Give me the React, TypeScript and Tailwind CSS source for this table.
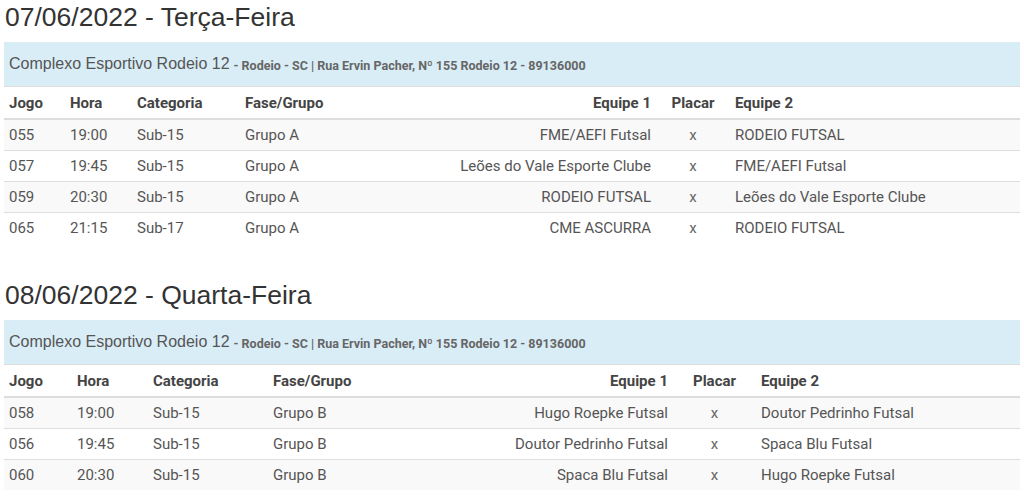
import React from "react";

type Row = [string, string, string, string, string, string];

const day1: Row[] = [
  ["055", "19:00", "Sub-15", "Grupo A", "FME/AEFI Futsal", "RODEIO FUTSAL"],
  ["057", "19:45", "Sub-15", "Grupo A", "Leões do Vale Esporte Clube", "FME/AEFI Futsal"],
  ["059", "20:30", "Sub-15", "Grupo A", "RODEIO FUTSAL", "Leões do Vale Esporte Clube"],
  ["065", "21:15", "Sub-17", "Grupo A", "CME ASCURRA", "RODEIO FUTSAL"],
];

const day2: Row[] = [
  ["058", "19:00", "Sub-15", "Grupo B", "Hugo Roepke Futsal", "Doutor Pedrinho Futsal"],
  ["056", "19:45", "Sub-15", "Grupo B", "Doutor Pedrinho Futsal", "Spaca Blu Futsal"],
  ["060", "20:30", "Sub-15", "Grupo B", "Spaca Blu Futsal", "Hugo Roepke Futsal"],
];

function Section({
  title,
  rows,
  widths,
  className,
}: {
  title: string;
  rows: Row[];
  widths: number[];
  className?: string;
}) {
  return (
    <div className={className}>
      <h3 className="pl-[5px] pt-[2px] text-[26.5px] leading-[30px] text-[#333] font-['Liberation_Sans',Arial,sans-serif]">
        {title}
      </h3>
      <div className="mx-[4px] mt-[10px]">
        <div className="flex h-[44px] items-center whitespace-nowrap bg-[#d9edf7] px-[5px] text-[#555] font-['Liberation_Sans',Arial,sans-serif]">
          <span className="text-[16px] leading-[20px]">Complexo Esportivo Rodeio 12</span>
          <span className="ml-[4px] mt-[3px] text-[12.5px] leading-[16px] font-bold font-['Roboto',sans-serif] text-[#666]">
            - Rodeio - SC | Rua Ervin Pacher, Nº 155 Rodeio 12 - 89136000
          </span>
        </div>
        <table className="w-full table-fixed border-collapse font-['Roboto',sans-serif] text-[15px] leading-[20px] text-[#555]">
          <colgroup>
            {widths.map((w, i) => (
              <col key={i} style={{ width: w }} />
            ))}
            <col />
          </colgroup>
          <thead>
            <tr className="border-t border-[#ddd] border-b-2 border-b-[#ddd] text-[#444]">
              <th className="px-[5px] pt-[6px] pb-[5px] text-left font-bold">Jogo</th>
              <th className="px-[5px] pt-[6px] pb-[5px] text-left font-bold">Hora</th>
              <th className="px-[5px] pt-[6px] pb-[5px] text-left font-bold">Categoria</th>
              <th className="px-[5px] pt-[6px] pb-[5px] text-left font-bold">Fase/Grupo</th>
              <th className="px-[5px] pt-[6px] pb-[5px] text-right font-bold">Equipe 1</th>
              <th className="px-[5px] pt-[6px] pb-[5px] text-center font-bold">Placar</th>
              <th className="px-[5px] pt-[6px] pb-[5px] text-left font-bold">Equipe 2</th>
            </tr>
          </thead>
          <tbody>
            {rows.map((r, i) => (
              <tr
                key={r[0]}
                className={`border-t border-[#ddd] first:border-t-0 ${i % 2 === 0 ? "bg-[#f9f9f9]" : "bg-white"}`}
              >
                <td className="p-[5px] whitespace-nowrap">{r[0]}</td>
                <td className="p-[5px] whitespace-nowrap">{r[1]}</td>
                <td className="p-[5px] whitespace-nowrap">{r[2]}</td>
                <td className="p-[5px] whitespace-nowrap">{r[3]}</td>
                <td className="p-[5px] text-right whitespace-nowrap">{r[4]}</td>
                <td className="p-[5px] text-center text-[#666]">x</td>
                <td className="p-[5px] whitespace-nowrap">{r[5]}</td>
              </tr>
            ))}
          </tbody>
        </table>
      </div>
    </div>
  );
}

export default function App() {
  return (
    <div className="w-[1024px] h-[502px] overflow-hidden bg-white">
      <Section
        title="07/06/2022 - Terça-Feira"
        rows={day1}
        widths={[61, 67, 108, 200, 216, 74]}
      />
      <Section
        title="08/06/2022 - Quarta-Feira"
        rows={day2}
        widths={[68, 76, 120, 200, 205, 83]}
        className="mt-[35px]"
      />
    </div>
  );
}
